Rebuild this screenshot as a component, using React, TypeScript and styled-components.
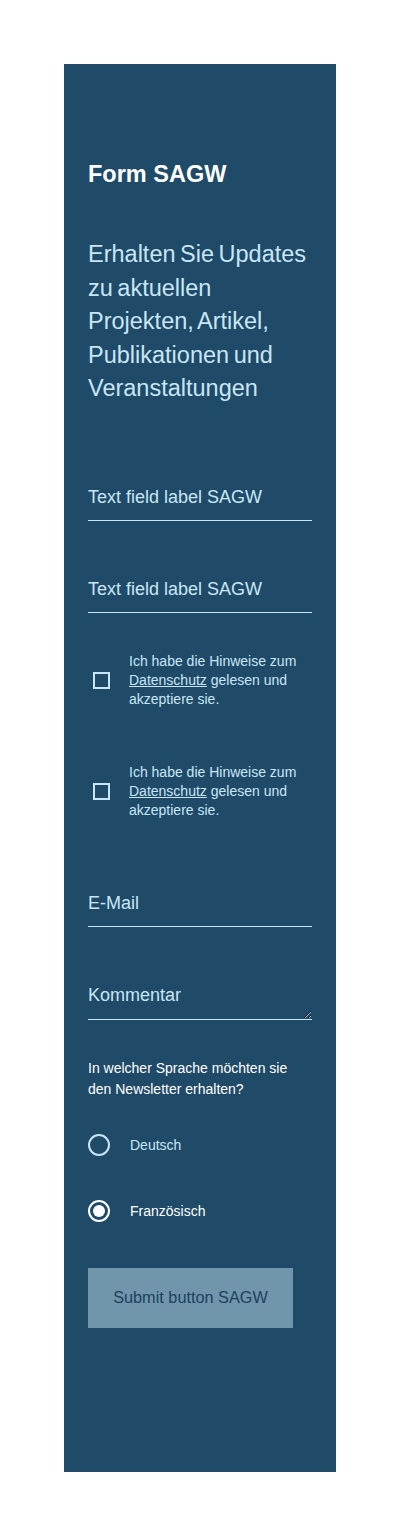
import styled, { createGlobalStyle } from "styled-components";

const GlobalStyle = createGlobalStyle`
  body {
    margin: 0;
    background: #ffffff;
    font-family: "Liberation Sans", Arial, sans-serif;
  }
`;

const Page = styled.div`
  padding: 64px;
`;

const Panel = styled.form`
  background-color: #1f4a68;
  width: 272px;
  min-height: 1408px;
  box-sizing: border-box;
  padding: 96px 24px 144px 24px;
  display: flex;
  flex-direction: column;
`;

const Title = styled.h2`
  margin: 0;
  font-size: 23.5px;
  line-height: 28px;
  font-weight: bold;
  color: #ffffff;
`;

const Lead = styled.p`
  margin: 50px 0 0 0;
  font-size: 23.5px;
  line-height: 33.5px;
  font-weight: normal;
  word-spacing: -2px;
  color: #c8e6f6;
`;

const Field = styled.div<{ $top: number }>`
  margin-top: ${(p) => p.$top}px;
  border-bottom: 1px solid #c8e6f6;
`;

const TextInput = styled.input`
  display: block;
  width: 100%;
  box-sizing: border-box;
  background: transparent;
  border: none;
  outline: none;
  padding: 0 0 12px 0;
  font-family: "Liberation Sans", Arial, sans-serif;
  font-size: 18px;
  line-height: 22px;
  color: #c8e6f6;

  &::placeholder {
    color: #c8e6f6;
    opacity: 1;
  }
`;

const TextArea = styled.textarea`
  display: block;
  width: 100%;
  box-sizing: border-box;
  background: transparent;
  border: none;
  outline: none;
  padding: 0;
  height: 35px;
  font-family: "Liberation Sans", Arial, sans-serif;
  font-size: 18px;
  line-height: 22px;
  color: #c8e6f6;

  &::placeholder {
    color: #c8e6f6;
    opacity: 1;
  }
`;

const CheckRow = styled.label<{ $top: number }>`
  margin-top: ${(p) => p.$top}px;
  display: flex;
  align-items: center;
  gap: 19px;
  padding-left: 5px;
`;

const Box = styled.span`
  flex: none;
  width: 17px;
  height: 17px;
  box-sizing: border-box;
  border: 2px solid #c8e6f6;
`;

const CheckText = styled.span`
  font-size: 14px;
  line-height: 19px;
  color: #c8e6f6;
`;

const Link = styled.a`
  color: #c8e6f6;
  text-decoration: underline;
`;

const Question = styled.p`
  margin: 38px 0 0 0;
  font-size: 14px;
  line-height: 21px;
  color: #ffffff;
`;

const RadioRow = styled.label<{ $top: number }>`
  margin-top: ${(p) => p.$top}px;
  display: flex;
  align-items: center;
  gap: 20px;
`;

const Circle = styled.span<{ $checked?: boolean }>`
  flex: none;
  width: 22px;
  height: 22px;
  box-sizing: border-box;
  border-radius: 50%;
  border: 2px solid ${(p) => (p.$checked ? "#ffffff" : "#c8e6f6")};
  display: flex;
  align-items: center;
  justify-content: center;

  &::after {
    content: "";
    display: ${(p) => (p.$checked ? "block" : "none")};
    width: 12px;
    height: 12px;
    border-radius: 50%;
    background: #ffffff;
  }
`;

const RadioText = styled.span<{ $checked?: boolean }>`
  font-size: 14px;
  line-height: 20px;
  color: ${(p) => (p.$checked ? "#ffffff" : "#c8e6f6")};
`;

const Submit = styled.button`
  margin-top: 46px;
  align-self: flex-start;
  width: 205px;
  height: 60px;
  border: none;
  background-color: #7195ab;
  color: #1d4260;
  font-family: "Liberation Sans", Arial, sans-serif;
  font-size: 16.3px;
`;

const consent = (
  <CheckText>
    Ich habe die Hinweise zum <Link>Datenschutz</Link> gelesen und akzeptiere
    sie.
  </CheckText>
);

export default function App() {
  return (
    <Page>
      <GlobalStyle />
      <Panel onSubmit={(e) => e.preventDefault()}>
        <Title>Form SAGW</Title>
        <Lead>
          Erhalten Sie Updates zu aktuellen Projekten, Artikel, Publikationen
          und Veranstaltungen
        </Lead>
        <Field $top={80}>
          <TextInput placeholder="Text field label SAGW" />
        </Field>
        <Field $top={57}>
          <TextInput placeholder="Text field label SAGW" />
        </Field>
        <CheckRow $top={39}>
          <Box />
          {consent}
        </CheckRow>
        <CheckRow $top={54}>
          <Box />
          {consent}
        </CheckRow>
        <Field $top={72}>
          <TextInput placeholder="E-Mail" />
        </Field>
        <Field $top={57}>
          <TextArea placeholder="Kommentar" />
        </Field>
        <Question>In welcher Sprache möchten sie den Newsletter erhalten?</Question>
        <RadioRow $top={34}>
          <Circle />
          <RadioText>Deutsch</RadioText>
        </RadioRow>
        <RadioRow $top={44}>
          <Circle $checked />
          <RadioText $checked>Französisch</RadioText>
        </RadioRow>
        <Submit type="submit">Submit button SAGW</Submit>
      </Panel>
    </Page>
  );
}
